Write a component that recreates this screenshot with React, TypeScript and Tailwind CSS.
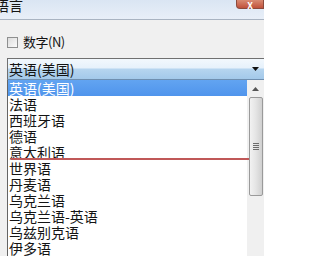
import React from 'react';

const languages = [
  '法语',
  '西班牙语',
  '德语',
  '意大利语',
  '世界语',
  '丹麦语',
  '乌克兰语',
  '乌克兰语-英语',
  '乌兹别克语',
  '伊多语',
];

const font = { fontFamily: '"Noto Sans CJK SC", "Liberation Sans", sans-serif' };

function App() {
  return (
    <div className="relative w-[264px] h-[256px] overflow-hidden bg-[#f0f0f0] text-[#141414]" style={font}>
      {/* title bar */}
      <div className="flex h-[20px] items-start justify-between border-b border-[#a9b4c2] bg-gradient-to-b from-[#dae5f3] to-[#e8eff8]">
        <span className="-ml-[5px] -mt-[4px] text-[14px] leading-[18px]">语言</span>
        <div className="flex h-[9px] w-[28px] items-end justify-center rounded-bl-[4px] border border-t-0 border-[#8c4a3c] bg-gradient-to-b from-[#d88a72] to-[#c0503a]">
          <span className="-mb-[2px] text-[9px] font-bold leading-none text-white">X</span>
        </div>
      </div>

      {/* checkbox */}
      <div className="mt-[15px] flex items-center gap-[5px] pl-[7px]">
        <div className="h-[11px] w-[11px] border border-[#8e8f8f] bg-gradient-to-br from-[#dcdcdc] to-[#fbfbfb]" />
        <span className="text-[13px] leading-[14px] tracking-[-0.5px]">数字(N)</span>
      </div>

      {/* combobox */}
      <div className="ml-[7px] mt-[9px] flex h-[22px] items-center justify-between border border-r-0 border-[#707070] border-b-[#6f8fb0] bg-[linear-gradient(to_bottom,#f2f8fd_0%,#e6f1fb_45%,#b6d5ef_50%,#a3c9ea_100%)] pl-[1px] pr-[5px]">
        <span className="text-[14px] leading-[16px]">英语(美国)</span>
        <svg width="7" height="4" viewBox="0 0 7 4">
          <path d="M0 0H7L3.5 4Z" fill="#111" />
        </svg>
      </div>

      {/* dropdown list */}
      <div className="relative ml-[7px] flex border-l border-[#646464] bg-white">
        <div className="flex-1">
          <div className="h-[16px] bg-gradient-to-b from-[#62a4f1] to-[#4f94ec] pl-[1px] text-[14px] leading-[16px] text-white">
            英语(美国)
          </div>
          {languages.map((l) => (
            <div key={l} className="h-[16px] pl-[1px] text-[14px] leading-[16px] whitespace-nowrap">
              {l}
            </div>
          ))}
        </div>
        <div className="flex w-[17px] flex-col items-center bg-[#f0f0f0]">
          <div className="flex h-[17px] w-full items-center justify-center">
            <svg width="7" height="4" viewBox="0 0 7 4">
              <path d="M0 4H7L3.5 0Z" fill="#555" />
            </svg>
          </div>
          <div className="flex h-[99px] w-[14px] items-center justify-center rounded-[2px] border border-[#9a9a9a] bg-gradient-to-r from-[#f2f2f2] via-[#e4e4e4] to-[#d0d0d0]">
            <div className="flex flex-col gap-[1px]">
              <div className="h-px w-[6px] bg-[#6c6c6c]" />
              <div className="h-px w-[6px] bg-[#6c6c6c]" />
              <div className="h-px w-[6px] bg-[#6c6c6c]" />
              <div className="h-px w-[6px] bg-[#6c6c6c]" />
            </div>
          </div>
        </div>
        {/* red annotation line */}
        <div className="absolute left-[3px] top-[78px] h-[2px] w-[238px] bg-[#c05858]" />
      </div>
    </div>
  );
}

export default App;
